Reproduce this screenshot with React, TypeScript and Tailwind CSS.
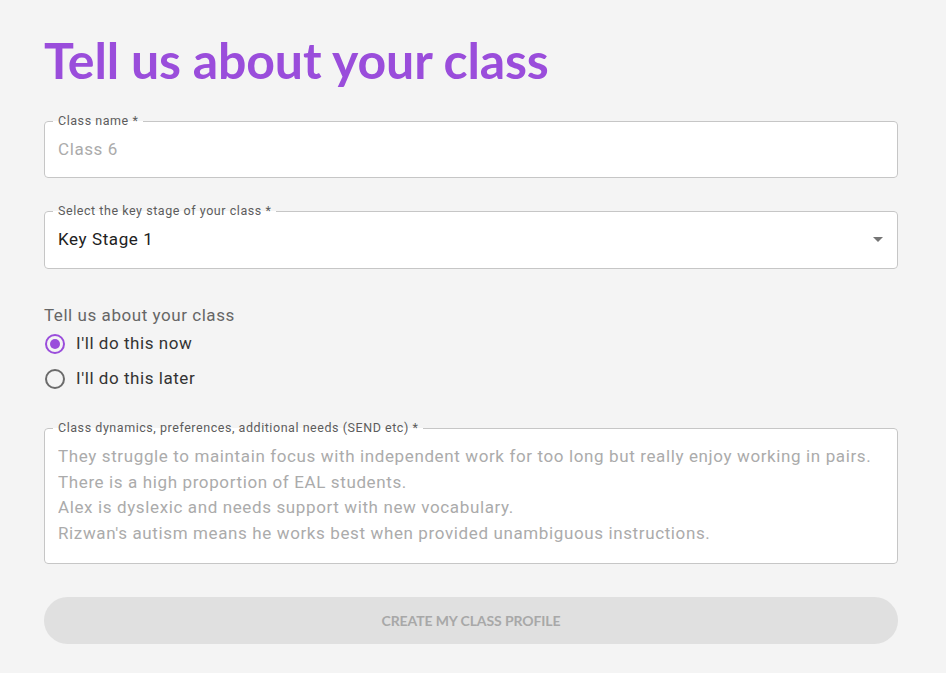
import React, { useState } from 'react';

const Field = ({ label, children }: { label: string; children: React.ReactNode }) => (
  <fieldset className="border border-[#c6c6c6] rounded-[4px] bg-white px-[13px] min-w-0">
    <legend className="ml-[-5px] px-[5px] text-[12.5px] leading-[12px] tracking-[0.55px] text-[#5c5c5c]">{label}</legend>
    {children}
  </fieldset>
);

const Radio = ({ checked, label, onClick }: { checked: boolean; label: string; onClick: () => void }) => (
  <label className="flex items-center h-[35px] cursor-pointer" onClick={onClick}>
    <span
      className={
        checked
          ? 'w-[20px] h-[20px] ml-[1px] rounded-full border-2 border-[#9a4ddb] flex items-center justify-center'
          : 'w-[20px] h-[20px] ml-[1px] rounded-full border-2 border-[#6b6b6b] flex items-center justify-center'
      }
    >
      {checked && <span className="w-[10px] h-[10px] rounded-full bg-[#9a4ddb]" />}
    </span>
    <span className="ml-[11px] text-[17px] tracking-[0.55px] text-[#333333]">{label}</span>
  </label>
);

const App = () => {
  const [now, setNow] = useState(true);

  return (
    <div className="min-h-screen bg-[#f4f4f4] pl-[44px] pr-[48px] pt-[28px] font-['Roboto',sans-serif]">
      {/* Heading */}
      <h1 className="font-['Lato',sans-serif] font-bold text-[50px] leading-[64px] tracking-[-0.15px] text-[#9a4ddb]">
        Tell us about your class
      </h1>

      <div className="mt-[23px]">
        <Field label="Class name *">
          <input
            className="w-full h-[44px] mb-[6px] bg-transparent outline-none text-[17px] tracking-[0.6px] text-[#222] placeholder:text-[#ababab]"
            placeholder="Class 6"
          />
        </Field>
      </div>

      <div className="mt-[27px]">
        <Field label="Select the key stage of your class *">
          <div className="flex items-center justify-between h-[45px] mb-[6px]">
            <span className="text-[17px] tracking-[0.6px] text-[#212121]">Key Stage 1</span>
            <svg width="10" height="5" viewBox="0 0 10 5" className="mr-[1px]">
              <path d="M0 0 L10 0 L5 5 Z" fill="#757575" />
            </svg>
          </div>
        </Field>
      </div>

      {/* Radio group */}
      <div className="mt-[35px]">
        <div className="text-[17px] leading-[22px] tracking-[0.55px] text-[#666666]">Tell us about your class</div>
        <Radio checked={now} label="I'll do this now" onClick={() => setNow(true)} />
        <Radio checked={!now} label="I'll do this later" onClick={() => setNow(false)} />
      </div>

      <div className="mt-[26px]">
        <Field label="Class dynamics, preferences, additional needs (SEND etc) *">
          <textarea
            className="block w-full h-[129px] pt-[10px] resize-none bg-transparent outline-none text-[17px] leading-[25.7px] tracking-[0.62px] text-[#222] placeholder:text-[#ababab]"
            placeholder={
              'They struggle to maintain focus with independent work for too long but really enjoy working in pairs.\nThere is a high proportion of EAL students.\nAlex is dyslexic and needs support with new vocabulary.\nRizwan\'s autism means he works best when provided unambiguous instructions.'
            }
          />
        </Field>
      </div>

      <button
        disabled
        className="mt-[33px] w-full h-[47px] rounded-full bg-[#e0e0e0] font-['Lato',sans-serif] font-bold text-[14px] tracking-[-0.1px] text-[#a8a8a8] uppercase"
      >
        Create my class profile
      </button>
    </div>
  );
};

export default App;
